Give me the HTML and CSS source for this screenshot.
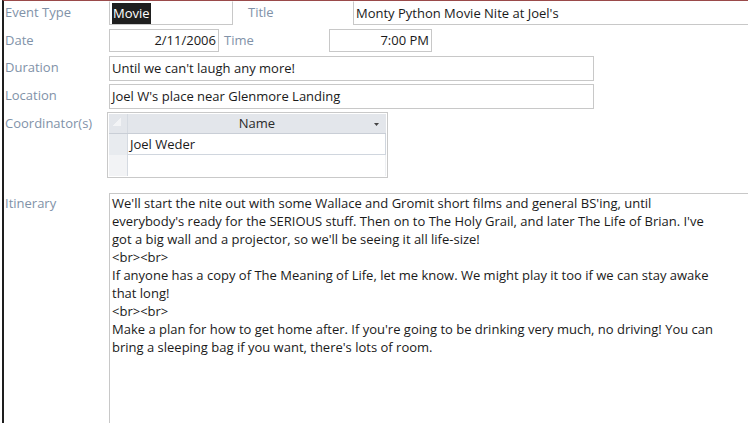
FILE: index.html
```html
<!DOCTYPE html>
<html lang="en">
<head>
    <meta charset="UTF-8">
    <meta name="viewport" content="width=device-width, initial-scale=1.0">
    <title>Event</title>
    <link rel="stylesheet" href="styles.css">
</head>
<body>
    <div class="form">
        <div class="row row-first">
            <div class="label">Event Type</div>
            <div class="field event-type"><span class="selected">Movie</span></div>
            <div class="label label-inline title-label">Title</div>
            <div class="field grow">Monty Python Movie Nite at Joel's</div>
        </div>

        <div class="row row-date">
            <div class="label">Date</div>
            <div class="field date right">2/11/2006</div>
            <div class="label label-inline time-label">Time</div>
            <div class="field time right">7:00 PM</div>
        </div>

        <div class="row row-text">
            <div class="label">Duration</div>
            <div class="field wide">Until we can't laugh any more!</div>
        </div>

        <div class="row row-text">
            <div class="label">Location</div>
            <div class="field wide">Joel W's place near Glenmore Landing</div>
        </div>

        <div class="row row-sub">
            <div class="label label-sub">Coordinator(s)</div>
            <div class="subform">
                <div class="sub-head">
                    <div class="selector corner"></div>
                    <div class="col-name">Name
                        <svg class="arrow" width="5" height="3" viewBox="0 0 5 3"><path d="M0 0h5L2.5 3z" fill="#444"/></svg>
                    </div>
                </div>
                <div class="sub-row">
                    <div class="selector"></div>
                    <div class="cell">Joel Weder</div>
                </div>
                <div class="sub-row empty">
                    <div class="selector light"></div>
                    <div class="cell blank"></div>
                </div>
            </div>
        </div>

        <div class="row row-memo">
            <div class="label label-memo">Itinerary</div>
            <div class="field memo">
                We'll start the nite out with some Wallace and Gromit short films and general BS'ing, until<br>
                everybody's ready for the SERIOUS stuff. Then on to The Holy Grail, and later The Life of Brian. I've<br>
                got a big wall and a projector, so we'll be seeing it all life-size!<br>
                &lt;br&gt;&lt;br&gt;<br>
                If anyone has a copy of The Meaning of Life, let me know. We might play it too if we can stay awake<br>
                that long!<br>
                &lt;br&gt;&lt;br&gt;<br>
                Make a plan for how to get home after. If you're going to be drinking very much, no driving! You can<br>
                bring a sleeping bag if you want, there's lots of room.
            </div>
        </div>
    </div>
</body>
</html>
```

FILE: styles.css
```css
body {
    margin: 0;
    font-family: "Open Sans", "Noto Sans", sans-serif;
    font-size: 13px;
    color: #1a1a1a;
    background-color: #fff;
    overflow: hidden;
    height: 423px;
}

.form {
    margin-left: 2px;
    padding-left: 1px;
    height: 423px;
    box-sizing: border-box;
    border-left: 2px solid #1e1e1e;
    border-top: 1px solid #9a4a4a;
    overflow: hidden;
}

.row {
    display: flex;
    align-items: flex-start;
}

.label {
    width: 104px;
    flex: none;
    color: #8192a8;
    line-height: 22px;
    white-space: nowrap;
}

.label-inline {
    width: 105px;
}

.title-label {
    margin-left: 15px;
}

.time-label {
    margin-left: 5px;
}

.field {
    box-sizing: border-box;
    border: 1px solid #c8c8c8;
    padding: 0 2px;
    white-space: nowrap;
    background-color: #fff;
}

.right {
    text-align: right;
}

.row-first {
    height: 24px;
}

.row-first .field {
    height: 24px;
    line-height: 22px;
    border-top-color: transparent;
}

.row-first .label {
    line-height: 22px;
}

.event-type {
    width: 124px;
    flex: none;
}

.selected {
    background-color: #1f1f1f;
    color: #fff;
    padding: 1px 1px 2px;
}

.grow {
    flex: 1;
    margin-right: -4px;
    height: 25px;
}

.row-date {
    margin-top: 4px;
}

.row-date .field {
    height: 23px;
    line-height: 21px;
}

.row-date .label {
    line-height: 23px;
}

.date {
    width: 110px;
    flex: none;
}

.time {
    width: 103px;
    flex: none;
}

.row-text {
    margin-top: 4px;
}

.row-text + .row-text {
    margin-top: 3px;
}

.row-text .label {
    line-height: 22px;
}

.wide {
    width: 485px;
    height: 25px;
    line-height: 23px;
}

.row-sub {
    margin-top: 3px;
}

.label-sub {
    width: 102px;
    line-height: 22px;
}

.subform {
    width: 281px;
    height: 66px;
    box-sizing: border-box;
    border: 1px solid #c9c9c9;
    padding: 1px;
    background-color: #fff;
}

.sub-head {
    display: flex;
    height: 19px;
    background-color: #e3e6eb;
    border-bottom: 1px solid #c9ced6;
}

.selector {
    width: 18px;
    flex: none;
    background-color: #e8ebef;
    border-right: 1px solid #d5dae1;
}

.selector.corner {
    background: linear-gradient(135deg, transparent 50%, #f3f4f6 50%) 4px 4px / 8px 8px no-repeat, #e3e6eb;
}

.selector.light {
    background-color: #f2f3f5;
}

.col-name {
    flex: 1;
    position: relative;
    text-align: center;
    line-height: 19px;
    color: #2a2a2a;
}

.arrow {
    position: absolute;
    right: 7px;
    top: 9px;
}

.sub-row {
    display: flex;
    height: 21px;
}

.sub-row .cell {
    width: 258px;
    box-sizing: border-box;
    border-right: 1px solid #d0d6de;
    border-bottom: 1px solid #d0d6de;
    padding-left: 2px;
    line-height: 20px;
}

.sub-row.empty {
    height: 21px;
}

.sub-row .cell.blank {
    border-bottom: none;
    border-right: 1px solid #eef0f3;
}

.row-memo {
    margin-top: 15px;
}

.label-memo {
    line-height: 20px;
}

.memo {
    flex: 1;
    margin-right: -4px;
    height: 260px;
    padding: 0 2px;
    line-height: 18px;
}
```
